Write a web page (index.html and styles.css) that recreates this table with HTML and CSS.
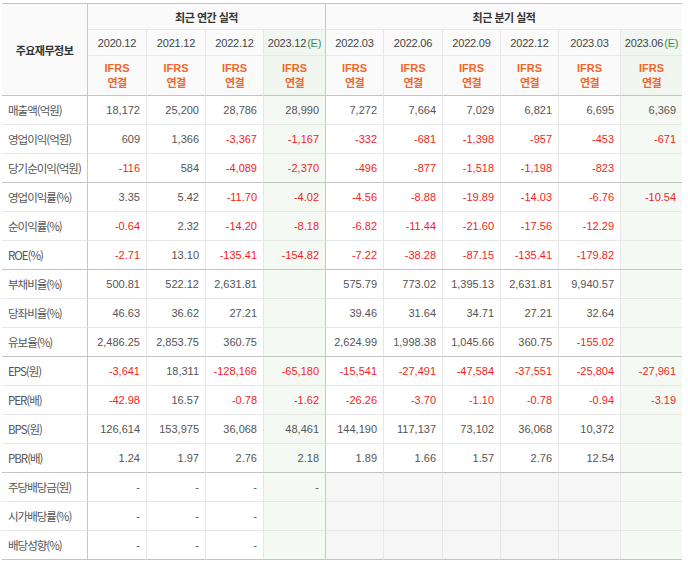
FILE: index.html
```html
<!DOCTYPE html>
<html lang="ko">
<head>
<meta charset="utf-8">
<title>주요재무정보</title>
<link rel="stylesheet" href="styles.css">
</head>
<body>
<table class="fin">
  <colgroup>
    <col class="c-label"><col class="c59"><col class="c59"><col class="c58"><col class="c62">
    <col class="c58"><col class="c59"><col class="c58"><col class="c58"><col class="c62"><col class="c61">
  </colgroup>
  <thead>
    <tr class="h1">
      <th rowspan="3" class="lbl-head sep">주요재무정보</th>
      <th colspan="4" class="title sep">최근 연간 실적</th>
      <th colspan="6" class="title">최근 분기 실적</th>
    </tr>
    <tr class="h2">
      <th class="date">2020.12</th>
      <th class="date">2021.12</th>
      <th class="date">2022.12</th>
      <th class="date est sep">2023.12<span class="e">(E)</span></th>
      <th class="date">2022.03</th>
      <th class="date">2022.06</th>
      <th class="date">2022.09</th>
      <th class="date">2022.12</th>
      <th class="date">2023.03</th>
      <th class="date est">2023.06<span class="e">(E)</span></th>
    </tr>
    <tr class="h3">
      <th class="ifrs">IFRS<br><span class="kr">연결</span></th>
      <th class="ifrs">IFRS<br><span class="kr">연결</span></th>
      <th class="ifrs">IFRS<br><span class="kr">연결</span></th>
      <th class="ifrs est sep">IFRS<br><span class="kr">연결</span></th>
      <th class="ifrs">IFRS<br><span class="kr">연결</span></th>
      <th class="ifrs">IFRS<br><span class="kr">연결</span></th>
      <th class="ifrs">IFRS<br><span class="kr">연결</span></th>
      <th class="ifrs">IFRS<br><span class="kr">연결</span></th>
      <th class="ifrs">IFRS<br><span class="kr">연결</span></th>
      <th class="ifrs est">IFRS<br><span class="kr">연결</span></th>
    </tr>
  </thead>
  <tbody>
    <tr>
      <th class="lbl sep">매출액(억원)</th>
      <td>18,172</td><td>25,200</td><td>28,786</td><td class="est sep">28,990</td>
      <td>7,272</td><td>7,664</td><td>7,029</td><td>6,821</td><td>6,695</td><td class="est">6,369</td>
    </tr>
    <tr>
      <th class="lbl sep">영업이익(억원)</th>
      <td>609</td><td>1,366</td><td class="neg">-3,367</td><td class="est sep neg">-1,167</td>
      <td class="neg">-332</td><td class="neg">-681</td><td class="neg">-1,398</td><td class="neg">-957</td><td class="neg">-453</td><td class="est neg">-671</td>
    </tr>
    <tr class="grp">
      <th class="lbl sep">당기순이익(억원)</th>
      <td class="neg">-116</td><td>584</td><td class="neg">-4,089</td><td class="est sep neg">-2,370</td>
      <td class="neg">-496</td><td class="neg">-877</td><td class="neg">-1,518</td><td class="neg">-1,198</td><td class="neg">-823</td><td class="est"></td>
    </tr>
    <tr>
      <th class="lbl sep">영업이익률(%)</th>
      <td>3.35</td><td>5.42</td><td class="neg">-11.70</td><td class="est sep neg">-4.02</td>
      <td class="neg">-4.56</td><td class="neg">-8.88</td><td class="neg">-19.89</td><td class="neg">-14.03</td><td class="neg">-6.76</td><td class="est neg">-10.54</td>
    </tr>
    <tr>
      <th class="lbl sep">순이익률(%)</th>
      <td class="neg">-0.64</td><td>2.32</td><td class="neg">-14.20</td><td class="est sep neg">-8.18</td>
      <td class="neg">-6.82</td><td class="neg">-11.44</td><td class="neg">-21.60</td><td class="neg">-17.56</td><td class="neg">-12.29</td><td class="est"></td>
    </tr>
    <tr class="grp">
      <th class="lbl sep">ROE(%)</th>
      <td class="neg">-2.71</td><td>13.10</td><td class="neg">-135.41</td><td class="est sep neg">-154.82</td>
      <td class="neg">-7.22</td><td class="neg">-38.28</td><td class="neg">-87.15</td><td class="neg">-135.41</td><td class="neg">-179.82</td><td class="est"></td>
    </tr>
    <tr>
      <th class="lbl sep">부채비율(%)</th>
      <td>500.81</td><td>522.12</td><td>2,631.81</td><td class="est sep"></td>
      <td>575.79</td><td>773.02</td><td>1,395.13</td><td>2,631.81</td><td>9,940.57</td><td class="est"></td>
    </tr>
    <tr>
      <th class="lbl sep">당좌비율(%)</th>
      <td>46.63</td><td>36.62</td><td>27.21</td><td class="est sep"></td>
      <td>39.46</td><td>31.64</td><td>34.71</td><td>27.21</td><td>32.64</td><td class="est"></td>
    </tr>
    <tr class="grp">
      <th class="lbl sep">유보율(%)</th>
      <td>2,486.25</td><td>2,853.75</td><td>360.75</td><td class="est sep"></td>
      <td>2,624.99</td><td>1,998.38</td><td>1,045.66</td><td>360.75</td><td class="neg">-155.02</td><td class="est"></td>
    </tr>
    <tr>
      <th class="lbl sep">EPS(원)</th>
      <td class="neg">-3,641</td><td>18,311</td><td class="neg">-128,166</td><td class="est sep neg">-65,180</td>
      <td class="neg">-15,541</td><td class="neg">-27,491</td><td class="neg">-47,584</td><td class="neg">-37,551</td><td class="neg">-25,804</td><td class="est neg">-27,961</td>
    </tr>
    <tr>
      <th class="lbl sep">PER(배)</th>
      <td class="neg">-42.98</td><td>16.57</td><td class="neg">-0.78</td><td class="est sep neg">-1.62</td>
      <td class="neg">-26.26</td><td class="neg">-3.70</td><td class="neg">-1.10</td><td class="neg">-0.78</td><td class="neg">-0.94</td><td class="est neg">-3.19</td>
    </tr>
    <tr>
      <th class="lbl sep">BPS(원)</th>
      <td>126,614</td><td>153,975</td><td>36,068</td><td class="est sep">48,461</td>
      <td>144,190</td><td>117,137</td><td>73,102</td><td>36,068</td><td>10,372</td><td class="est"></td>
    </tr>
    <tr class="grp">
      <th class="lbl sep">PBR(배)</th>
      <td>1.24</td><td>1.97</td><td>2.76</td><td class="est sep">2.18</td>
      <td>1.89</td><td>1.66</td><td>1.57</td><td>2.76</td><td>12.54</td><td class="est"></td>
    </tr>
    <tr>
      <th class="lbl sep">주당배당금(원)</th>
      <td>-</td><td>-</td><td>-</td><td class="est sep">-</td>
      <td class="na"></td><td class="na"></td><td class="na"></td><td class="na"></td><td class="na"></td><td class="est"></td>
    </tr>
    <tr>
      <th class="lbl sep">시가배당률(%)</th>
      <td>-</td><td>-</td><td>-</td><td class="est sep"></td>
      <td class="na"></td><td class="na"></td><td class="na"></td><td class="na"></td><td class="na"></td><td class="est"></td>
    </tr>
    <tr class="grp">
      <th class="lbl sep">배당성향(%)</th>
      <td>-</td><td>-</td><td>-</td><td class="est sep"></td>
      <td class="na"></td><td class="na"></td><td class="na"></td><td class="na"></td><td class="na"></td><td class="est"></td>
    </tr>
  </tbody>
</table>
</body>
</html>
```

FILE: styles.css
```css
html, body {
  margin: 0;
  padding: 0;
  background: #ffffff;
}

body {
  font-family: "Liberation Sans", Arial, "Noto Sans CJK KR", sans-serif;
  font-size: 11px;
  color: #555555;
}

.fin {
  margin: 3px 0 0 2px;
  width: 680px;
  table-layout: fixed;
  border-collapse: separate;
  border-spacing: 0;
  border-top: 1px solid #c4c4c4;
}

.c-label { width: 86px; }
.c58 { width: 58px; }
.c59 { width: 59px; }
.c61 { width: 61px; }
.c62 { width: 62px; }

.fin th,
.fin td {
  padding: 0;
  border-right: 1px solid #e7e7e7;
  border-bottom: 1px solid #e7e7e7;
  white-space: nowrap;
  overflow: hidden;
}

.fin tr > :last-child {
  border-right: 0;
}

.fin thead th {
  background: #fafafa;
  text-align: center;
  font-weight: normal;
}

.h1 { height: 26px; }
.h2 { height: 26px; }
.h3 { height: 40px; }
.fin tbody tr { height: 29px; }

.lbl-head,
.title {
  font-family: "Noto Sans CJK KR", sans-serif;
  font-weight: bold !important;
  font-size: 11px;
  color: #333333;
  letter-spacing: -0.5px;
}

.fin thead tr.h3 th {
  border-bottom-color: #c4c4c4;
}

.fin thead th.lbl-head {
  border-bottom-color: #c4c4c4;
  background: #fafafa;
}

.date {
  color: #444444;
  font-size: 11px;
  letter-spacing: -0.2px;
}

.date .e {
  color: #3f8f52;
  margin-left: 1px;
}

.ifrs {
  color: #f0672a;
  font-weight: bold !important;
  font-size: 11px;
  line-height: 14px;
}

.ifrs .kr {
  font-family: "Noto Sans CJK KR", sans-serif;
  font-weight: bold;
  font-size: 11px;
  letter-spacing: -0.5px;
}

.fin thead th.est {
  background: #f1f6f1;
}

.lbl {
  font-family: "Noto Sans CJK KR", sans-serif;
  font-weight: normal;
  font-size: 11.5px;
  letter-spacing: -1px;
  text-align: left;
  padding-left: 6px !important;
  color: #555555;
  background: #ffffff;
}

.fin td {
  text-align: right;
  padding-right: 6px;
  color: #555555;
}

.fin td.neg {
  color: #f21d1d;
}

.fin td.est {
  background: #f4f9f4;
}

.fin td.na {
  background: #f6f6f6;
}

.fin .sep {
  border-right-color: #c8c8c8;
}

.fin tr.grp th,
.fin tr.grp td {
  border-bottom-color: #c4c4c4;
}
```
